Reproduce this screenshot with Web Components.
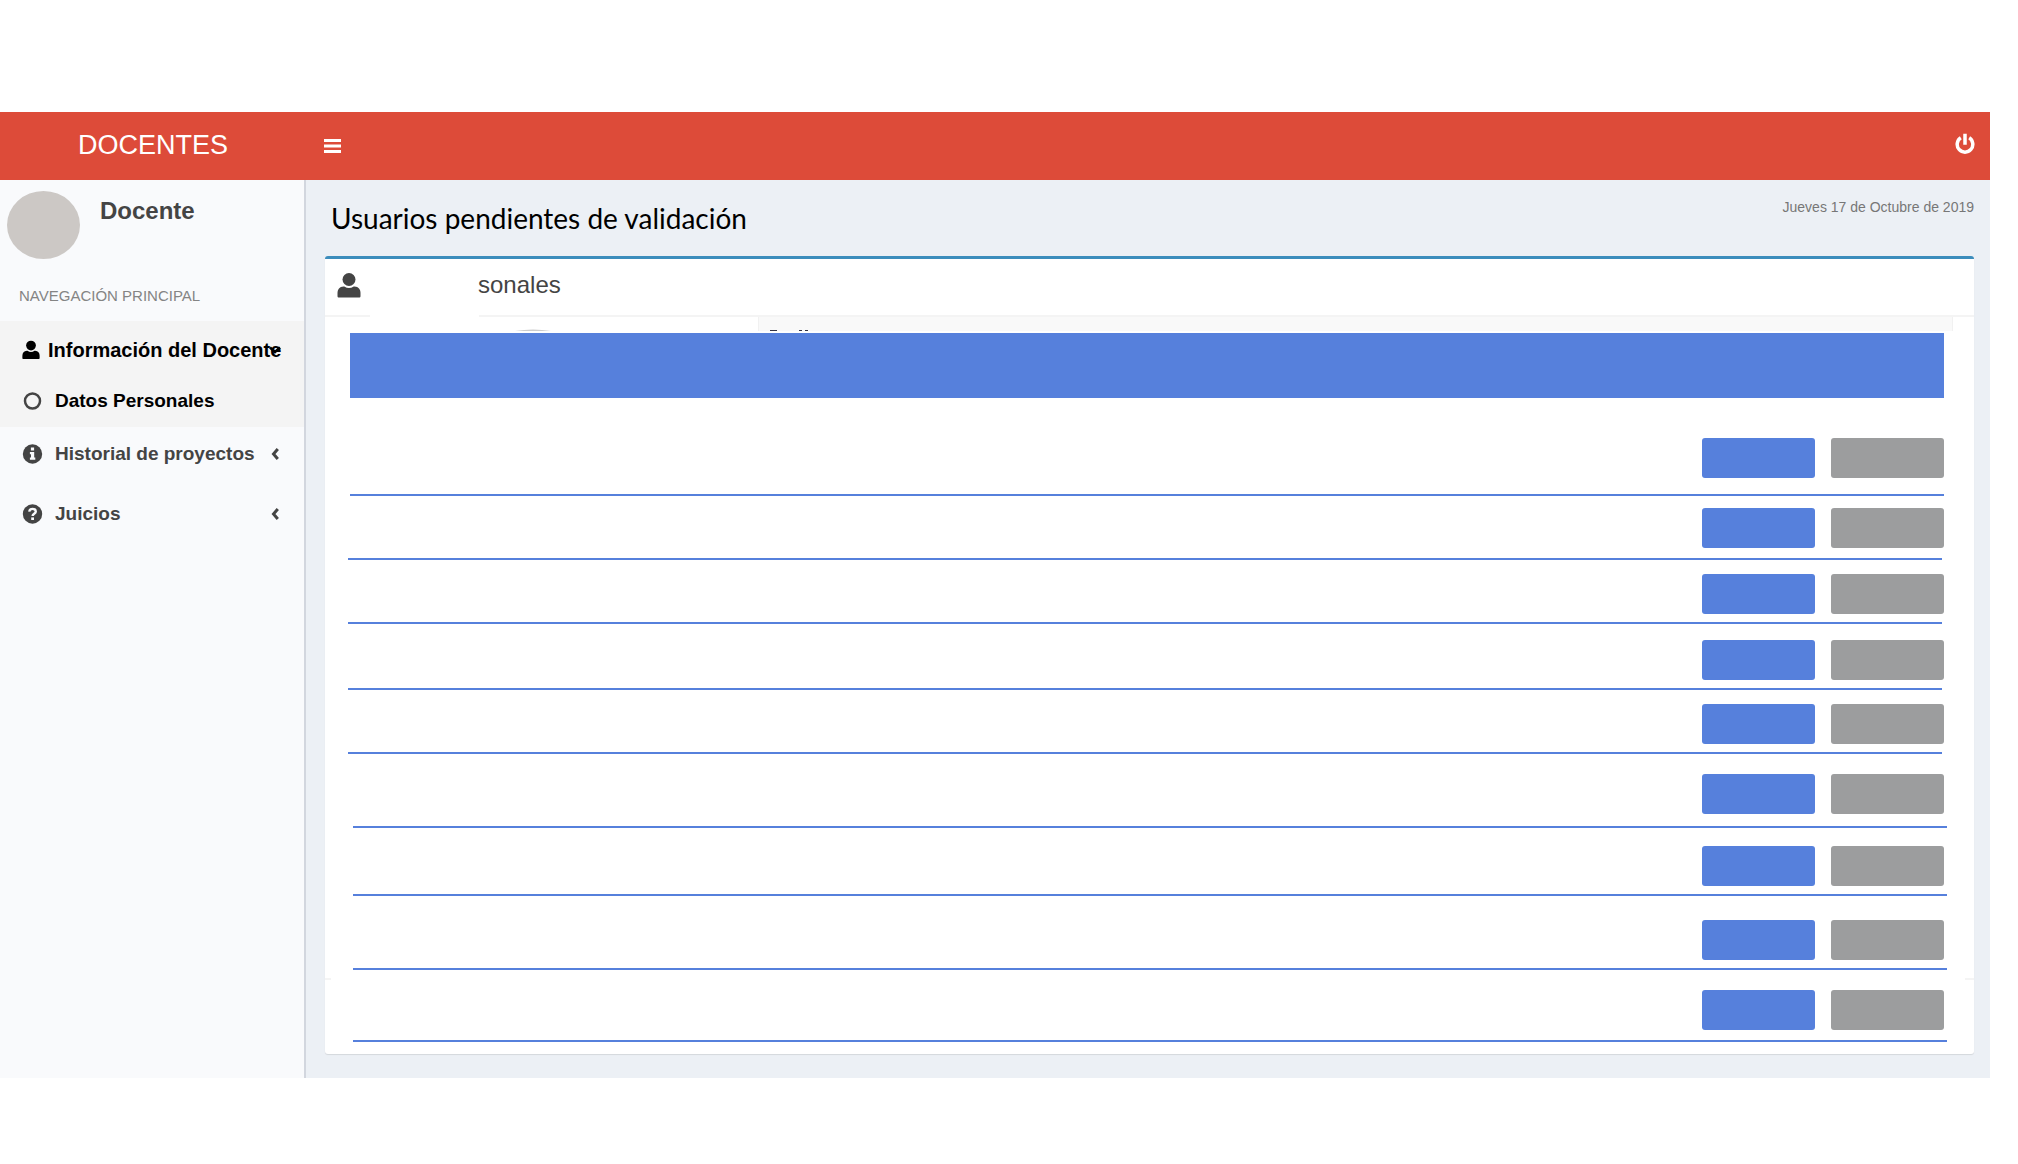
<!DOCTYPE html>
<html lang="es">
<head>
<meta charset="utf-8">
<title>Docentes</title>
<style>
html, body { margin: 0; background: #fff; }
body { font-family: "Liberation Sans", Arial, sans-serif; color: #444; }
</style>
</head>
<body>
<docentes-app></docentes-app>
<script>
const ICONS = {
  bars: '<svg viewBox="0 0 17 14" width="17" height="14"><path fill="currentColor" d="M0 0h17v3H0zM0 5.500h17v3H0zM0 11h17v3H0z"/></svg>',
  power: '<svg viewBox="0 0 20 22" width="20" height="22" fill="none" stroke="currentColor" stroke-width="3.500"><path d="M5.800 4.800a7.800 7.800 0 1 0 8.400 0M10 .8v11"/></svg>',
  user: '<svg viewBox="0 0 24 25" width="100%" height="100%"><circle cx="12" cy="6.500" r="6.500" fill="currentColor"/><path fill="currentColor" d="M6.500 13.500h.8a8.500 8.500 0 0 0 9.400 0h.8c4 0 6 3 6 6.500v3c0 1-.5 1.500-1.500 1.500H2C1 24.500.5 24 .5 23v-3c0-3.500 2-6.500 6-6.500z"/></svg>',
  ring: '<svg viewBox="0 0 20 20" width="100%" height="100%"><circle cx="10" cy="10" r="7.500" fill="none" stroke="#444" stroke-width="2.500"/></svg>',
  info: '<svg viewBox="0 0 20 20" width="100%" height="100%"><circle cx="10" cy="10" r="9.700" fill="currentColor"/><path fill="#f9fafc" d="M8.400 3.600h3.200v2.800H8.400zM7.400 8h4.300v5.600h1.100v2.200H7.400v-2.200h1.100v-3.400H7.400z"/></svg>',
  help: '<svg viewBox="0 0 20 20" width="100%" height="100%"><circle cx="10" cy="10" r="9.700" fill="currentColor"/><path fill="none" stroke="#f9fafc" stroke-width="2.400" d="M6.700 7.600C7 5.600 8.400 4.900 10 4.900c1.900 0 3.300 1 3.300 2.700 0 2.200-3.200 2.200-3.200 4.400"/><path fill="#f9fafc" d="M8.700 13.400h2.800V16H8.700z"/></svg>',
  left: '<svg viewBox="0 0 8 12" width="8" height="12"><path fill="none" stroke="currentColor" stroke-width="3" d="M6.800 1 2.500 6l4.300 5"/></svg>',
  down: '<svg viewBox="0 0 12 8" width="12" height="8"><path fill="none" stroke="currentColor" stroke-width="2.600" d="M1 1.500 6 6l5-4.500"/></svg>'
};
const define = (name, html, fill) => customElements.define(name, class extends HTMLElement {
  connectedCallback() {
    if (this.shadowRoot) return;
    this.attachShadow({ mode: 'open' }).innerHTML = html;
    if (fill) fill(this, this.shadowRoot);
  }
});

define('ui-icon', '<style>:host{display:inline-flex;flex:none}svg{display:block}</style>',
  (el, root) => root.innerHTML += ICONS[el.getAttribute('name')]);

define('top-bar', `<style>
:host{display:flex;height:68px;background:#dd4b39;color:#fff}
a{display:flex;width:306px;align-items:center;justify-content:center;color:inherit;text-decoration:none;font-size:27px;line-height:32px;padding-bottom:2px;box-sizing:border-box}
nav{flex:1;display:flex;justify-content:space-between;align-items:center;padding:0 15px 0 18px}
button{display:flex;border:0;background:none;color:inherit;padding:0;cursor:pointer}
.power{padding-bottom:4px}
</style>
<a href="#">DOCENTES</a>
<nav><button aria-label="Alternar menú"><ui-icon name="bars"></ui-icon></button>
<button class="power" aria-label="Salir"><ui-icon name="power"></ui-icon></button></nav>`);

define('user-panel', `<style>
:host{display:flex;gap:20px;padding:11px 7px 0;height:92px;box-sizing:border-box}
.avatar{width:73px;height:68px;border-radius:50%;background:#ccc8c5}
strong{font-size:24px;line-height:28px;padding-top:6px}
</style><div class="avatar"></div><strong><slot></slot></strong>`);

define('menu-item', `<style>
:host{display:block;color:#444}
:host([active]){color:#000}
a{display:flex;align-items:center;height:60px;padding:0 25px 6px 22px;box-sizing:border-box;color:inherit;text-decoration:none;font-size:19px;line-height:24px;font-weight:bold}
.icon{width:21px;height:20px;margin-right:12px}
.text{flex:1;white-space:nowrap}
:host([level="root"]) a{font-size:20px;padding-bottom:2px}
:host([level="root"]) .icon{width:18px;margin-right:8px}
:host([level="root"]) .arrow{margin-left:-12px}
:host([level="sub"]) a{height:46px}
</style><a href="#"><ui-icon class="icon"></ui-icon><span class="text"><slot></slot></span></a>`,
(el, root) => {
  const icon = document.createElement('ui-icon');
  icon.className = 'icon';
  icon.setAttribute('name', el.getAttribute('icon'));
  root.querySelector('.icon').replaceWith(icon);
  if (el.hasAttribute('arrow')) root.querySelector('a').insertAdjacentHTML('beforeend', '<ui-icon class="arrow" name="' + el.getAttribute('arrow') + '"></ui-icon>');
});

define('side-bar', `<style>
:host{display:block;width:304px;flex:none;background:#f9fafc;border-right:2px solid #d2d6de}
h2{margin:0;padding:14px 19px 16px;font-size:15px;line-height:19px;font-weight:normal;color:#848484}
.open{background:#f4f4f4;height:106px}
</style>
<user-panel>Docente</user-panel>
<h2>NAVEGACIÓN PRINCIPAL</h2>
<nav><div class="open">
<menu-item level="root" active icon="user" arrow="down">Información del Docente</menu-item>
<menu-item level="sub" active icon="ring">Datos Personales</menu-item></div>
<menu-item level="item" icon="info" arrow="left">Historial de proyectos</menu-item>
<menu-item level="item" icon="help" arrow="left">Juicios</menu-item></nav>`);

define('pending-row', `<style>
:host{display:block}
.actions{display:flex;justify-content:flex-end;gap:16px}
button{width:113px;height:40px;border:0;border-radius:3px;padding:0;background:#5680dc;cursor:pointer}
button.discard{background:#9c9d9e}
.rule{height:2px;background:#5680dc}
:host([shift="start"]) .rule{margin:0 2px 0 -2px}
:host([shift="end"]) .rule{margin:0 -3px 0 3px}
</style><div class="actions"><button aria-label="Validar"></button><button class="discard" aria-label="Descartar"></button></div><div class="rule"></div>`,
(el, root) => {
  root.querySelector('.actions').style.padding = el.getAttribute('lead') + 'px 0 ' + el.getAttribute('trail') + 'px';
});

define('user-card', `<style>
:host{display:block;position:relative;background:#fff;border-top:3px solid #3c8dbc;border-radius:3px;box-shadow:0 1px 1px rgba(0,0,0,.1)}
header{display:flex;align-items:center;height:56px;padding-bottom:4px;box-sizing:border-box}
.icon{width:24px;height:25px;margin-left:12px}
h3{margin:0 0 0 117px;font-size:24px;line-height:28px;font-weight:normal}
.divider{display:flex;gap:109px}
.divider i{height:2px;width:45px;background:#f4f4f4}
.divider i + i{flex:1}
.strip{display:flex;height:14px;margin:0 21px 2px 190px;align-items:flex-end}
.strip div{height:14px;flex:1;background:#f9f9f9;border:solid #f1f1f1;border-width:0 1px;margin-left:207px}
.strip svg{display:block}
.body{padding:0 30px 12px 25px}
.band{height:65px;background:#5680dc}
.foot{position:absolute;left:0;right:0;bottom:74px;display:flex;justify-content:space-between}
.foot i{height:2px;width:6px;background:#f4f4f4}
.foot i + i{width:9px}
</style>
<header><ui-icon class="icon" name="user"></ui-icon><h3>sonales</h3></header>
<div class="divider"><i></i><i></i></div>
<div class="strip"><svg width="36" height="2"><path d="M0 2Q18-1 36 2z" fill="#ccc"/></svg>
<div><svg width="60" height="14"><path d="M11 13h7v1h-7zM40 13h3v1h-3zM46 13h3v1h-3z" fill="#334"/></svg></div></div>
<div class="body"><div class="band"></div><slot></slot></div>
<div class="foot"><i></i><i></i></div>`);

define('docentes-app', `<style>
:host{display:block;padding:112px 28px 85px 0}
.columns{display:flex;align-items:stretch}
main{flex:1;min-width:0;background:#ecf0f5;padding:14px 16px 24px 19px}
.heading{display:flex;justify-content:space-between;align-items:flex-start;height:62px}
h1{margin:0;padding:6px;font:400 28px/36px Lato,"Open Sans",sans-serif;color:#000}
time{font-size:14px;line-height:18px;padding-top:4px;color:#777}
</style>
<top-bar></top-bar>
<div class="columns"><side-bar></side-bar>
<main><div class="heading"><h1>Usuarios pendientes de validación</h1><time datetime="2019-10-17">Jueves 17 de Octubre de 2019</time></div>
<user-card>
<pending-row lead="40" trail="16"></pending-row>
<pending-row lead="12" trail="10" shift="start"></pending-row>
<pending-row lead="14" trail="8" shift="start"></pending-row>
<pending-row lead="16" trail="8" shift="start"></pending-row>
<pending-row lead="14" trail="8" shift="start"></pending-row>
<pending-row lead="20" trail="12" shift="end"></pending-row>
<pending-row lead="18" trail="8" shift="end"></pending-row>
<pending-row lead="24" trail="8" shift="end"></pending-row>
<pending-row lead="20" trail="10" shift="end"></pending-row>
</user-card></main></div>`);
</script>
</body>
</html>
